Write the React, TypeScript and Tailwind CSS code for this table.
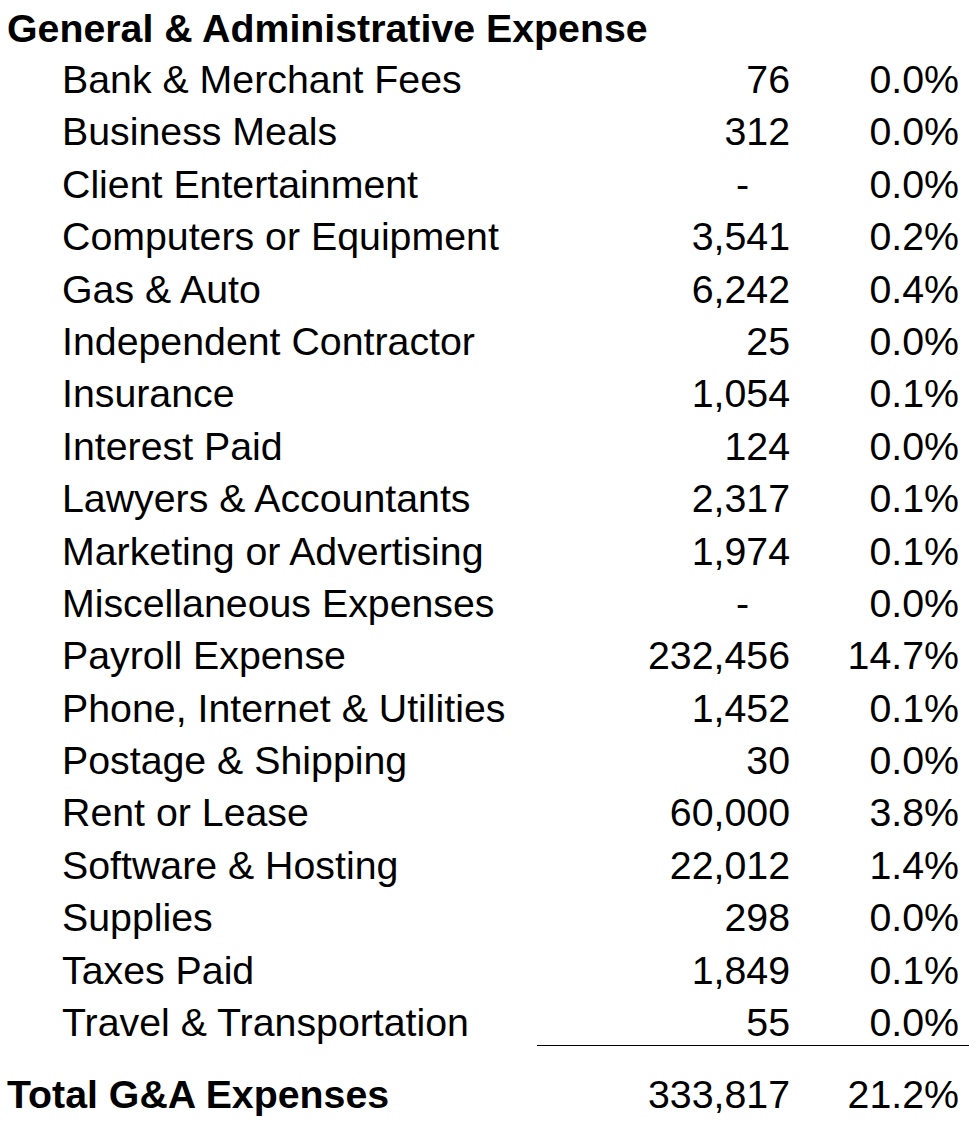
import React from "react";

const rows: [string, string, string][] = [
  ["Bank & Merchant Fees", "76", "0.0%"],
  ["Business Meals", "312", "0.0%"],
  ["Client Entertainment", "-", "0.0%"],
  ["Computers or Equipment", "3,541", "0.2%"],
  ["Gas & Auto", "6,242", "0.4%"],
  ["Independent Contractor", "25", "0.0%"],
  ["Insurance", "1,054", "0.1%"],
  ["Interest Paid", "124", "0.0%"],
  ["Lawyers & Accountants", "2,317", "0.1%"],
  ["Marketing or Advertising", "1,974", "0.1%"],
  ["Miscellaneous Expenses", "-", "0.0%"],
  ["Payroll Expense", "232,456", "14.7%"],
  ["Phone, Internet & Utilities", "1,452", "0.1%"],
  ["Postage & Shipping", "30", "0.0%"],
  ["Rent or Lease", "60,000", "3.8%"],
  ["Software & Hosting", "22,012", "1.4%"],
  ["Supplies", "298", "0.0%"],
  ["Taxes Paid", "1,849", "0.1%"],
  ["Travel & Transportation", "55", "0.0%"],
];

export default function App() {
  return (
    <div
      className="w-[969px] h-[1121px] bg-white text-black text-[39.3px] leading-[52.4px] pt-[2px]"
      style={{ fontFamily: '"Liberation Sans", Arial, sans-serif' }}
    >
      <div className="h-[51px] pl-[7px] font-bold whitespace-nowrap leading-[52.4px]">
        General &amp; Administrative Expense
      </div>
      {rows.map(([label, num, pct], i) => {
        const last = i === rows.length - 1;
        return (
          <div key={label} className="grid grid-cols-[537px_262px_170px] h-[52.4px]">
            <div className="pl-[62px] whitespace-nowrap">{label}</div>
            <div
              className={
                last
                  ? "text-right pr-[9px] border-b border-black h-[50px]"
                  : "text-right pr-[9px]"
              }
            >
              {num === "-" ? <span className="pr-[41px]">-</span> : num}
            </div>
            <div
              className={
                last
                  ? "text-right pr-[10px] border-b border-black h-[50px]"
                  : "text-right pr-[10px]"
              }
            >
              {pct}
            </div>
          </div>
        );
      })}
      <div className="grid grid-cols-[537px_262px_170px] h-[52.4px] mt-[20px]">
        <div className="pl-[7px] font-bold whitespace-nowrap">Total G&amp;A Expenses</div>
        <div className="text-right pr-[9px]">333,817</div>
        <div className="text-right pr-[10px]">21.2%</div>
      </div>
    </div>
  );
}
